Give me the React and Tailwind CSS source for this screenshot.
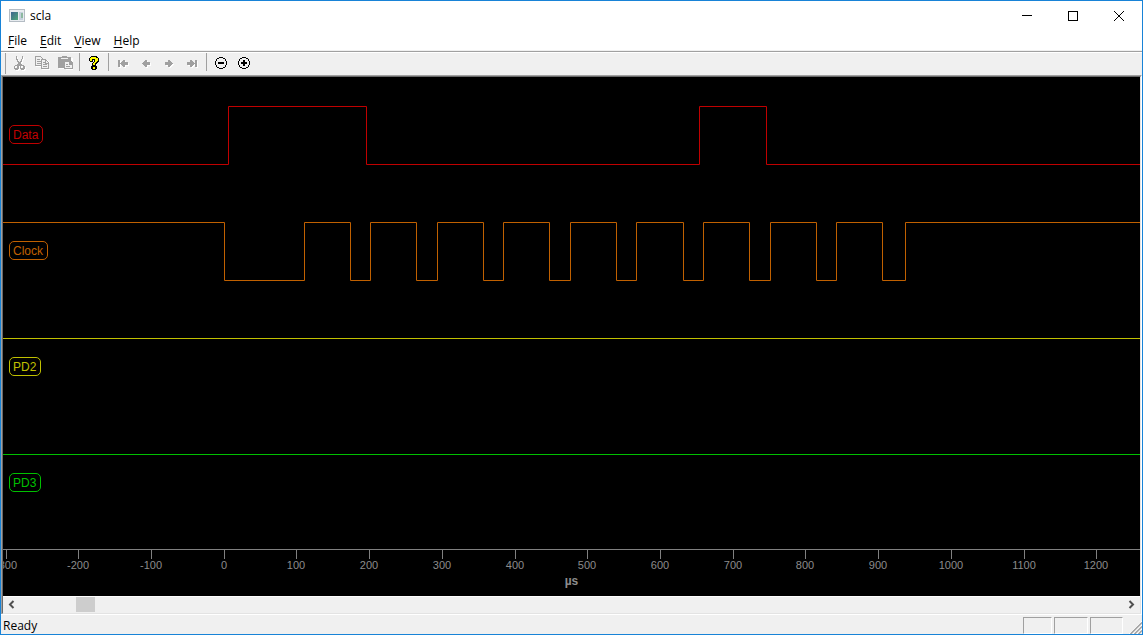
import React from 'react';
import { clsx } from 'clsx';

const MENUS = ['File', 'Edit', 'View', 'Help'];

const CHANNELS = [
  { name: 'Data', color: 'text-[#c00000]', high: false, edges: [225, 363, 696, 763] },
  {
    name: 'Clock',
    color: 'text-[#c06000]',
    high: true,
    edges: [221, 301, 347, 367, 413, 434, 480, 500, 546, 567, 613, 633, 680, 700, 746, 767, 813, 833, 879, 902],
  },
  { name: 'PD2', color: 'text-[#c0c000]', high: true, edges: [] },
  { name: 'PD3', color: 'text-[#00c000]', high: true, edges: [] },
];

const HIGH_Y = 29.5;
const LOW_Y = 87.5;
const PLOT_END = 4000;

const ORIGIN_X = 220.7;
const PX_PER_US = 0.7271;
const TICKS = Array.from({ length: 16 }, (_, i) => (i - 3) * 100);

function tracePath(high, edges) {
  let level = high;
  let d = `M-1 ${level ? HIGH_Y : LOW_Y}`;
  edges.forEach((x) => {
    level = !level;
    d += `H${x + 0.5}V${level ? HIGH_Y : LOW_Y}`;
  });
  return `${d}H${PLOT_END}`;
}

function Channel({ channel }) {
  return (
    <div className={clsx('relative h-[116px] overflow-hidden', channel.color)}>
      <svg className="block h-full w-full" fill="none" stroke="currentColor">
        <path d={tracePath(channel.high, channel.edges)} />
      </svg>
      <span className="absolute left-[6px] top-[48px] h-[19px] rounded-[5px] border border-current pl-[3px] pr-[4px] text-[12px] leading-[19px]">
        {channel.name}
      </span>
    </div>
  );
}

function TimeAxis() {
  return (
    <svg className="mt-auto block h-[55px] w-full shrink-0 overflow-hidden" fill="#8c8c8c">
      <g stroke="#808080">
        <path d={`M-1 8.5H${PLOT_END}`} />
        {TICKS.map((t) => {
          const x = Math.round(ORIGIN_X + t * PX_PER_US) + 0.5;
          return <path key={t} d={`M${x} 8V18`} />;
        })}
      </g>
      {TICKS.map((t) => (
        <text key={t} x={Math.round(ORIGIN_X + t * PX_PER_US)} y="28" textAnchor="middle" fontSize="11">
          {t}
        </text>
      ))}
      <text x="50%" y="44" textAnchor="middle" fontSize="12" fontWeight="bold">µs</text>
    </svg>
  );
}

function ToolButton({ label, children }) {
  return (
    <button type="button" aria-label={label} className="flex h-[20px] w-[23px] items-center pl-[3px]">
      <svg width="16" height="16" fill="none" shapeRendering="crispEdges">{children}</svg>
    </button>
  );
}

function Separator() {
  return <div className="ml-[2px] mr-[3px] h-[18px] w-px bg-[#a0a0a0]" />;
}

// Disabled glyphs carry a white copy one pixel down and right
function Etched({ d }) {
  return (
    <>
      <path d={d} fill="#fff" transform="translate(1 1)" />
      <path d={d} fill="#a0a0a0" />
    </>
  );
}

const ARROW_LEFT = 'M4 8h1v-1h1v-1h1v-1h2v2h3v3h-3v2h-2v-1h-1v-1h-1v-1h-1z';
const ARROW_RIGHT = 'M12 8h-1v-1h-1v-1h-1v-1h-2v2h-3v3h3v2h2v-1h1v-1h1v-1h1z';

function Toolbar() {
  return (
    <div role="toolbar" className="flex h-[22px] items-start bg-[#f0f0f0] pl-[4px]">
      <div className="mr-[2px] h-[21px] w-px bg-[#a0a0a0]" />
      <ToolButton label="Cut">
        <Etched d="M5 1h1v3h1v2h1v1h1v-1h1v-2h1v-3h1v3h-1v3h-1v2h1v1h2v1h1v3h-1v1h-3v-1h-1v-3h-1v3h-1v1h-3v-1h-1v-3h1v-1h2v-1h1v-2h-1v-2h-1zM4 11v2h2v-2zM10 11v2h2v-2z" />
      </ToolButton>
      <ToolButton label="Copy">
        <g transform="translate(1 0)">
          <path stroke="#fff" d="M1.500 2.500h5l3 3v6h-8zM7.500 5.500h5l3 3v6h-8z" />
          <path stroke="#a0a0a0" fill="#f0f0f0" d="M.5 1.500h5l3 3v6h-8zM2 4.500h3M2 6.500h4M2 8.500h4" />
          <path stroke="#a0a0a0" fill="#f0f0f0" d="M6.500 4.500h4l3 3v6h-7zM10.500 5v3h3M8 7.500h2M8 9.500h4M8 11.500h4" />
        </g>
      </ToolButton>
      <ToolButton label="Paste">
        <path fill="#fff" d="M2 3h14v12H9v-1H2z" />
        <path fill="#a0a0a0" d="M5 1h5v1h4v4h1v1h1v7H7v-1H1V2h4z" />
        <path stroke="#f0f0f0" d="M4 3.500h7" />
        <path fill="#f0f0f0" d="M8 7h4v3h3v3H8z" />
        <path stroke="#a0a0a0" d="M9 9.500h2M9 11.500h4M12.500 7v3" />
      </ToolButton>
      <Separator />
      <ToolButton label="About">
        <path fill="#000" d="M5 1h6v1h1v1h1v4h-1v1h-1v1h-1v2h1v3h-1v1H6v-1H5v-3h1V8h1V7h1V5H7v2H4V6H3V3h1V2h1z" />
        <path fill="#ff0" d="M5 2h5v1h2v3h-1v1h-1v1H9v2H7V8h1V7h1V4H6v2H4V3h1zM7 12h2v2H7z" />
      </ToolButton>
      <Separator />
      <ToolButton label="First edge">
        <g transform="translate(1 0)">
          <Etched d={`M2 5h2v7h-2z${ARROW_LEFT}`} />
        </g>
      </ToolButton>
      <ToolButton label="Previous edge"><Etched d={ARROW_LEFT} /></ToolButton>
      <ToolButton label="Next edge"><Etched d={ARROW_RIGHT} /></ToolButton>
      <ToolButton label="Last edge">
        <g transform="translate(-1 0)">
          <Etched d={`M12 5h2v7h-2z${ARROW_RIGHT}`} />
        </g>
      </ToolButton>
      <Separator />
      <ToolButton label="Zoom out">
        <circle cx="8" cy="8" r="5.500" stroke="#000" />
        <path fill="#000" d="M5 7h6v2H5z" />
      </ToolButton>
      <ToolButton label="Zoom in">
        <circle cx="8" cy="8" r="5.500" stroke="#000" />
        <path fill="#000" d="M5 7h2V5h2v2h2v2H9v2H7V9H5z" />
      </ToolButton>
    </div>
  );
}

function TitleBar() {
  return (
    <div className="flex h-[30px] items-center bg-white pl-[8px]">
      <svg width="16" height="14" shapeRendering="crispEdges">
        <defs>
          <linearGradient id="pane" x2="1" y2="1">
            <stop stopColor="#3c6490" />
            <stop offset="1" stopColor="#4fa878" />
          </linearGradient>
        </defs>
        <path fill="#b4bcc4" d="M0 0h16v13H0z" />
        <path fill="#e8ecf0" d="M1 1h14v11H1z" />
        <path fill="url(#pane)" d="M2 3h7v8H2z" />
        <path fill="#c4d0dc" d="M10 3h4v8h-4z" />
        <path fill="#8cb8a0" d="M12 4h2v5h-2z" />
      </svg>
      <h1 className="ml-[5px] text-[12px]">scla</h1>
      <div className="ml-auto flex">
        <button type="button" aria-label="Minimize" className="flex h-[30px] w-[46px] items-center justify-center">
          <svg width="10" height="10" stroke="#000" shapeRendering="crispEdges"><path d="M0 4.500h10" /></svg>
        </button>
        <button type="button" aria-label="Maximize" className="flex h-[30px] w-[46px] items-center justify-center">
          <svg width="10" height="10" stroke="#000" fill="none" shapeRendering="crispEdges"><path d="M.5.5h9v9h-9z" /></svg>
        </button>
        <button type="button" aria-label="Close" className="flex h-[30px] w-[46px] items-center justify-center">
          <svg width="10" height="10" stroke="#000"><path d="M0 0L10 10M10 0L0 10" /></svg>
        </button>
      </div>
    </div>
  );
}

function ScrollBar() {
  return (
    <div className="flex h-[16px] items-start bg-[#f0f0f0]">
      <button type="button" aria-label="Scroll left" className="flex h-[15px] w-[17px] items-center justify-center">
        <svg width="7" height="9" fill="none" stroke="#505050" strokeWidth="2"><path d="M5.500 1L2 4.500L5.500 8" /></svg>
      </button>
      <div className="flex-1">
        <div className="ml-[56px] h-[15px] w-[19px] bg-[#cdcdcd]" />
      </div>
      <button type="button" aria-label="Scroll right" className="flex h-[15px] w-[17px] items-center justify-center">
        <svg width="7" height="9" fill="none" stroke="#505050" strokeWidth="2"><path d="M1.500 1L5 4.500L1.500 8" /></svg>
      </button>
    </div>
  );
}

function StatusBar() {
  const pane = 'h-[17px] border border-t-[#a0a0a0] border-l-[#a0a0a0] border-r-white border-b-white';
  return (
    <div className="flex h-[19px] items-end bg-[#f0f0f0] pl-[2px]">
      <span className="flex-1 text-[12px] leading-[16px]">Ready</span>
      <div className="flex gap-[2px]">
        <div className={clsx(pane, 'w-[29px]')} />
        <div className={clsx(pane, 'w-[34px]')} />
        <div className={clsx(pane, 'w-[33px]')} />
      </div>
      <svg className="ml-[6px]" width="13" height="13" fill="none">
        <path stroke="#fff" d="M0 13L13 0M4 13l9-9M8 13l5-5" />
        <path stroke="#a0a0a0" strokeWidth="1.500" d="M1.500 13L13 1.500M5.500 13l7.500-7.500M9.500 13l3.500-3.500" />
      </svg>
    </div>
  );
}

export default function App() {
  return (
    <div className="flex min-h-screen flex-col border border-[#1883d7] bg-[#f0f0f0] font-['Open_Sans','Noto_Sans',sans-serif] text-black">
      <TitleBar />
      <nav className="flex h-[19px] items-center gap-[13px] bg-white pl-[7px] text-[12px] leading-[19px]">
        {MENUS.map((m) => (
          <button key={m} type="button">
            <span className="underline underline-offset-2">{m[0]}</span>
            {m.slice(1)}
          </button>
        ))}
      </nav>
      <div className="h-px bg-[#f0f0f0]" />
      <div className="h-px bg-[#a0a0a0]" />
      <div className="h-px bg-white" />
      <Toolbar />
      <main className="flex flex-1 flex-col border-l border-r border-t border-l-[#a0a0a0] border-r-white border-t-[#a0a0a0]">
        <div className="flex flex-1 flex-col border border-b-[#e3e3e3] border-l-[#696969] border-r-[#e3e3e3] border-t-[#696969]">
          <div className="flex flex-1 flex-col bg-black font-['Liberation_Sans',Arial,sans-serif]">
            {CHANNELS.map((c) => (
              <Channel key={c.name} channel={c} />
            ))}
            <TimeAxis />
          </div>
          <div className="h-px bg-white" />
          <ScrollBar />
        </div>
      </main>
      <div className="h-px bg-white" />
      <StatusBar />
    </div>
  );
}
